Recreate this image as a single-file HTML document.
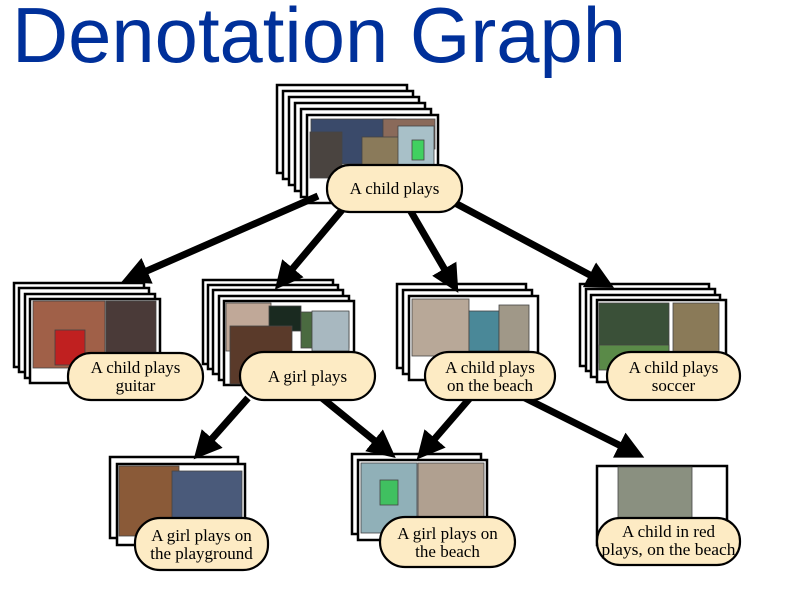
<!DOCTYPE html>
<html><head><meta charset="utf-8"><style>
html,body{margin:0;padding:0;background:#fff;width:792px;height:599px;overflow:hidden}
svg{display:block}
.t{font-family:"Liberation Serif",serif;font-size:17px;fill:#000;text-anchor:middle}
</style></head><body>
<svg width="792" height="599" viewBox="0 0 792 599" xmlns="http://www.w3.org/2000/svg">
<defs>
<marker id="ah" markerWidth="4" markerHeight="4" refX="2.2" refY="2" orient="auto" markerUnits="strokeWidth">
<path d="M0,0 L4,2 L0,4 Z" fill="#000"/></marker>
</defs>
<text x="12" y="62" font-family="Liberation Sans, sans-serif" font-size="78" fill="#00309a" textLength="614" lengthAdjust="spacingAndGlyphs">Denotation Graph</text>

<g stroke="#000" stroke-width="2.5" fill="#fff">
<rect x="277" y="85" width="130" height="88"/><rect x="283" y="91" width="130" height="88"/><rect x="289" y="97" width="130" height="88"/><rect x="295" y="103" width="130" height="88"/><rect x="301" y="109" width="130" height="88"/><rect x="307" y="115" width="131" height="88"/>
<rect x="14" y="283" width="130" height="84"/><rect x="19" y="288" width="130" height="84"/><rect x="25" y="294" width="130" height="84"/><rect x="30" y="299" width="130" height="84"/>
<rect x="203" y="280" width="130" height="84"/><rect x="208" y="285" width="130" height="84"/><rect x="213" y="290" width="130" height="84"/><rect x="219" y="296" width="130" height="84"/><rect x="224" y="301" width="130" height="84"/>
<rect x="397" y="284" width="129" height="84"/><rect x="403" y="290" width="129" height="84"/><rect x="409" y="296" width="129" height="84"/>
<rect x="580" y="284" width="129" height="82"/><rect x="586" y="289" width="129" height="82"/><rect x="591" y="295" width="129" height="82"/><rect x="597" y="300" width="129" height="82"/>
<rect x="110" y="457" width="128" height="81"/><rect x="117" y="464" width="128" height="81"/>
<rect x="352" y="454" width="129" height="80"/><rect x="358" y="460" width="129" height="80"/>
<rect x="597" y="466" width="130" height="79"/>
</g>

<g stroke="#444" stroke-width="0.8">
<rect x="311" y="119" width="85" height="45" fill="#3a4a6a"/>
<rect x="383" y="119" width="52" height="30" fill="#8a6a5a"/>
<rect x="310" y="132" width="32" height="46" fill="#4a4440"/>
<rect x="362" y="137" width="38" height="40" fill="#8a7a5a"/>
<rect x="398" y="126" width="36" height="45" fill="#a8c0c8"/>
<rect x="412" y="140" width="12" height="20" fill="#40d060"/>
<rect x="33" y="301" width="72" height="67" fill="#a06048"/>
<rect x="55" y="330" width="30" height="35" fill="#c02020"/>
<rect x="106" y="301" width="50" height="52" fill="#4a3a38"/>
<rect x="226" y="303" width="45" height="48" fill="#c0a898"/>
<rect x="269" y="306" width="32" height="25" fill="#1a2a20"/>
<rect x="301" y="312" width="48" height="36" fill="#4a6a40"/>
<rect x="312" y="311" width="37" height="40" fill="#a8b8c0"/>
<rect x="230" y="326" width="62" height="58" fill="#5a3a2a"/>
<rect x="412" y="299" width="57" height="57" fill="#b8a898"/>
<rect x="469" y="311" width="30" height="40" fill="#4a8898"/>
<rect x="499" y="305" width="30" height="46" fill="#a09888"/>
<rect x="599" y="303" width="70" height="60" fill="#3a5038"/>
<rect x="599" y="345" width="70" height="25" fill="#5a8a48"/>
<rect x="673" y="303" width="46" height="49" fill="#8a7a58"/>
<rect x="119" y="466" width="60" height="70" fill="#8a5a38"/>
<rect x="172" y="471" width="70" height="50" fill="#4a5a7a"/>
<rect x="361" y="463" width="56" height="70" fill="#90b0b8"/>
<rect x="380" y="480" width="18" height="25" fill="#40c060"/>
<rect x="418" y="463" width="66" height="55" fill="#b0a090"/>
<rect x="618" y="467" width="74" height="55" fill="#8a9080"/>
</g>

<g stroke="#000" stroke-width="7" fill="none" marker-end="url(#ah)">
<line x1="318" y1="196" x2="133" y2="277"/>
<line x1="342" y1="210" x2="283" y2="280"/>
<line x1="410" y1="210" x2="452" y2="282"/>
<line x1="455" y1="203" x2="603" y2="282"/>
<line x1="248" y1="398" x2="202" y2="450"/>
<line x1="322" y1="398" x2="386" y2="450"/>
<line x1="470" y1="398" x2="425" y2="450"/>
<line x1="525" y1="398" x2="633" y2="452"/>
</g>

<g stroke="#000" stroke-width="2.2" fill="#fdebc4">
<rect x="327" y="165" width="135" height="47" rx="23"/>
<rect x="68" y="353" width="135" height="47" rx="23"/>
<rect x="240" y="352" width="135" height="48" rx="24"/>
<rect x="425" y="352" width="130" height="48" rx="24"/>
<rect x="607" y="352" width="133" height="48" rx="24"/>
<rect x="135" y="518" width="133" height="52" rx="25"/>
<rect x="380" y="517" width="135" height="50" rx="25"/>
<rect x="597" y="518" width="143" height="47" rx="23"/>
</g>
<text class="t" x="394.5" y="194">A child plays</text>
<text class="t" x="135.5" y="373">A child plays</text><text class="t" x="135.5" y="391">guitar</text>
<text class="t" x="307.5" y="382">A girl plays</text>
<text class="t" x="490" y="373">A child plays</text><text class="t" x="490" y="391">on the beach</text>
<text class="t" x="673.5" y="373">A child plays</text><text class="t" x="673.5" y="391">soccer</text>
<text class="t" x="201.5" y="541">A girl plays on</text><text class="t" x="201.5" y="559">the playground</text>
<text class="t" x="447.5" y="539">A girl plays on</text><text class="t" x="447.5" y="557">the beach</text>
<text class="t" x="668.5" y="537">A child in red</text><text class="t" x="668.5" y="555" textLength="134" lengthAdjust="spacingAndGlyphs">plays, on the beach</text>
</svg>
</body></html>
